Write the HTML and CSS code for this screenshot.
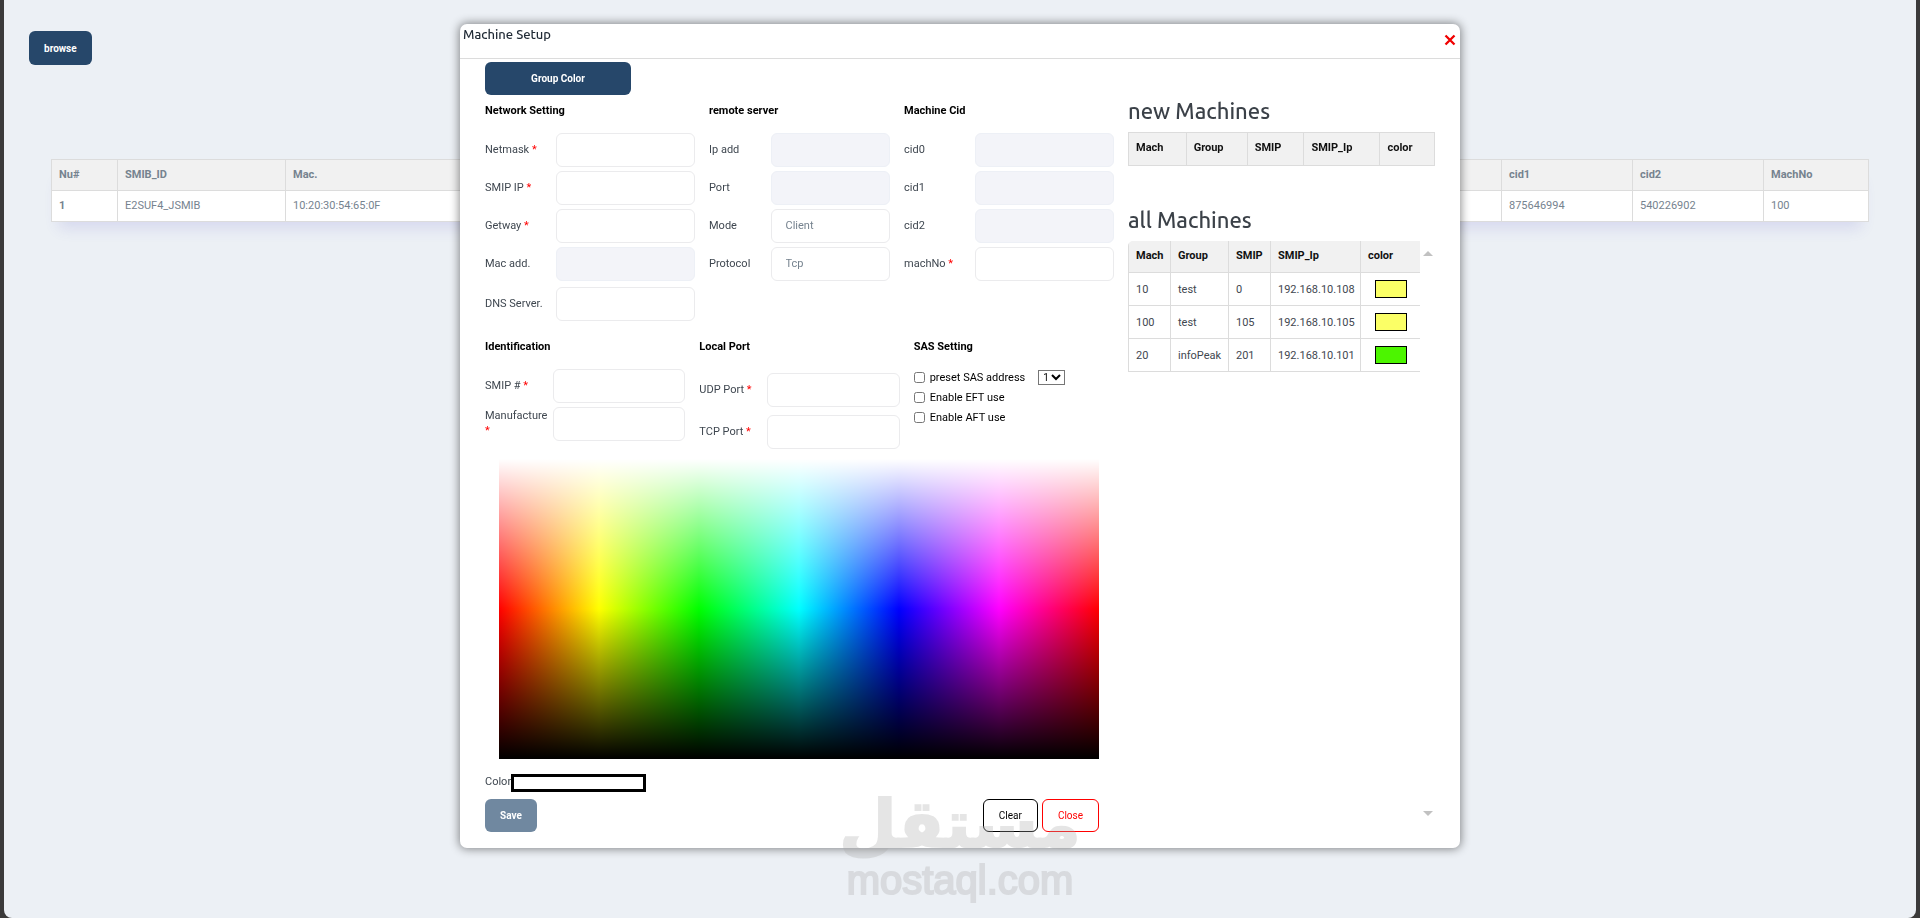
FILE: index.html
```
<!DOCTYPE html>
<html lang="en">
<head>
  <meta charset="UTF-8">
  <title>Machine Setup</title>
  <link rel="stylesheet" href="styles.css">
</head>
<body>
<div class="page">
  <button type="button" class="btn btn-primary btn-browse">browse</button>
  <table class="table main-table">
    <colgroup>
      <col class="c-nu"><col class="c-smib"><col><col class="c-cid"><col class="c-cid"><col class="c-mach">
    </colgroup>
    <thead>
      <tr><th>Nu#</th><th>SMIB_ID</th><th>Mac.</th><th>cid1</th><th>cid2</th><th>MachNo</th></tr>
    </thead>
    <tbody>
      <tr><th>1</th><td>E2SUF4_JSMIB</td><td>10:20:30:54:65:0F</td><td>875646994</td><td>540226902</td><td>100</td></tr>
    </tbody>
  </table>
</div>

<div class="overlay">
  <div class="modal" role="dialog" aria-labelledby="modal-title">
    <div class="modal-header">
      <span id="modal-title" class="modal-title">Machine Setup</span>
      <button type="button" class="btn-x" aria-label="Close dialog">
        <svg width="12" height="12" viewBox="0 0 12 12"><path d="M1.5 1.5L10.5 10.5M10.5 1.5L1.5 10.5" stroke="#f00000" stroke-width="2.3"/></svg>
      </button>
    </div>
    <div class="modal-body">
      <form class="setup">
        <button type="button" class="btn btn-primary btn-group">Group Color</button>
        <div class="cols cols-net">
          <div class="group">
            <h4>Network Setting</h4>
            <div class="field"><label for="netmask">Netmask <i>*</i></label><input type="text" id="netmask"></div>
            <div class="field"><label for="smipip">SMIP IP <i>*</i></label><input type="text" id="smipip"></div>
            <div class="field"><label for="getway">Getway <i>*</i></label><input type="text" id="getway"></div>
            <div class="field"><label for="macadd">Mac add.</label><input type="text" id="macadd" disabled></div>
            <div class="field field-dns"><label for="dns">DNS Server.</label><input type="text" id="dns"></div>
          </div>
          <div class="group">
            <h4>remote server</h4>
            <div class="field"><label for="ipadd">Ip add</label><input type="text" id="ipadd" disabled></div>
            <div class="field"><label for="port">Port</label><input type="text" id="port" disabled></div>
            <div class="field"><label for="mode">Mode</label><select id="mode"><option>Client</option></select></div>
            <div class="field"><label for="protocol">Protocol</label><select id="protocol"><option>Tcp</option></select></div>
          </div>
          <div class="group">
            <h4>Machine Cid</h4>
            <div class="field"><label for="cid0">cid0</label><input type="text" id="cid0" disabled></div>
            <div class="field"><label for="cid1">cid1</label><input type="text" id="cid1" disabled></div>
            <div class="field"><label for="cid2">cid2</label><input type="text" id="cid2" disabled></div>
            <div class="field"><label for="machno">machNo <i>*</i></label><input type="text" id="machno"></div>
          </div>
        </div>

        <div class="cols cols-id">
          <div class="group">
            <h4>Identification</h4>
            <div class="field"><label for="smip">SMIP # <i>*</i></label><input type="text" id="smip"></div>
            <div class="field"><label for="manufacture">Manufacture <i>*</i></label><input type="text" id="manufacture"></div>
          </div>
          <div class="group group-port">
            <h4>Local Port</h4>
            <div class="field"><label for="udp">UDP Port <i>*</i></label><input type="text" id="udp"></div>
            <div class="field"><label for="tcp">TCP Port <i>*</i></label><input type="text" id="tcp"></div>
          </div>
          <div class="group group-sas">
            <h4>SAS Setting</h4>
            <div class="check">
              <input type="checkbox" id="preset"><label for="preset">preset SAS address</label>
              <select class="sas-address" aria-label="SAS address"><option>1</option></select>
            </div>
            <div class="check"><input type="checkbox" id="eft"><label for="eft">Enable EFT use</label></div>
            <div class="check"><input type="checkbox" id="aft"><label for="aft">Enable AFT use</label></div>
          </div>
        </div>

        <div class="palette" role="img" aria-label="Color palette"></div>

        <div class="color-row"><label for="color">Color</label><input type="text" id="color" readonly></div>
        <div class="actions">
          <button type="button" class="btn btn-primary btn-save" disabled>Save</button>
          <button type="button" class="btn btn-clear">Clear</button>
          <button type="button" class="btn btn-close">Close</button>
        </div>
      </form>

      <div class="machines">
        <h2>new Machines</h2>
        <table class="table new-table">
          <thead><tr><th>Mach</th><th>Group</th><th>SMIP</th><th>SMIP_Ip</th><th>color</th></tr></thead>
        </table>
        <h2>all Machines</h2>
        <div class="scroll">
          <div class="scroll-view">
            <table class="table all-table">
              <colgroup>
                <col class="c-no"><col class="c-group"><col class="c-no"><col class="c-ip"><col>
              </colgroup>
              <thead><tr><th>Mach</th><th>Group</th><th>SMIP</th><th>SMIP_Ip</th><th>color</th></tr></thead>
              <tbody>
                <tr><td>10</td><td>test</td><td>0</td><td>192.168.10.108</td><td><span class="swatch yellow"></span></td></tr>
                <tr><td>100</td><td>test</td><td>105</td><td>192.168.10.105</td><td><span class="swatch yellow"></span></td></tr>
                <tr><td>20</td><td>infoPeak</td><td>201</td><td>192.168.10.101</td><td><span class="swatch green"></span></td></tr>
              </tbody>
            </table>
          </div>
          <div class="scroll-bar">
            <svg width="10" height="5" viewBox="0 0 10 5"><path d="M5 0L10 5H0z" fill="#c1c1c1"/></svg>
            <svg width="10" height="5" viewBox="0 0 10 5"><path d="M0 0H10L5 5z" fill="#c1c1c1"/></svg>
          </div>
        </div>
      </div>
    </div>
  </div>
</div>

<div class="watermark">
  <span class="wm-ar" lang="ar" dir="rtl">مستقل</span>
  <span class="wm-en">mostaql.com</span>
</div>
</body>
</html>
```
FILE: styles.css
```
* {
  box-sizing: border-box;
}

body {
  margin: 0;
  background: #3b3a3a;
  font-family: Roboto, "Liberation Sans", sans-serif;
  font-size: 11px;
  line-height: 15px;
  color: #3f4750;
}

button, input, select {
  font-family: inherit;
  font-size: inherit;
}

.page {
  min-height: 100vh;
  margin: 0 4px;
  padding: 31px 47px 0;
  background: #ecf0f5;
  border-radius: 0 0 8px 8px;
}

/* buttons */
.btn {
  display: block;
  height: 33px;
  padding: 0 15px;
  border: 1px solid transparent;
  border-radius: 6px;
  background: #fff;
  font-size: 10px;
}

.btn-primary {
  padding: 0 14px;
  background: #26476a;
  color: #fff;
  font-weight: 700;
}

.btn-browse {
  height: 34px;
  margin-left: -22px;
}

.btn-group {
  width: 146px;
}

.btn-save {
  background: #7088a0;
}

.btn-clear {
  margin-left: auto;
  border-color: #000;
  color: #000;
}

.btn-close {
  border-color: #f00;
  color: #f00;
}

/* tables */
.table {
  width: 100%;
  border-collapse: collapse;
  background: #fff;
}

.table th, .table td {
  padding: 7px;
  border: 1px solid #dcdcdc;
  text-align: left;
}

.table thead th {
  background: #f1f1f1;
  color: #111;
}

.main-table {
  table-layout: fixed;
  margin-top: 94px;
  box-shadow: 0 14px 14px -8px rgba(80, 70, 200, 0.14);
  color: #76838f;
}

.main-table thead th {
  color: #76838f;
}

.main-table th, .main-table td {
  padding-bottom: 8px;
}

.c-nu { width: 66px; }
.c-smib { width: 168px; }
.c-cid { width: 131px; }
.c-mach { width: 105px; }

/* dialog */
.overlay {
  position: fixed;
  inset: 0;
  padding-top: 24px;
}

.modal {
  width: 1000px;
  max-width: 96%;
  margin: 0 auto;
  background: #fff;
  border-radius: 7px;
  box-shadow: 0 0 10px 1px rgba(0, 0, 0, 0.45);
}

.modal-header {
  display: flex;
  justify-content: space-between;
  height: 35px;
  padding: 0 4px 2px 3px;
  border-bottom: 1px solid #dcdcdc;
}

.modal-title {
  font-family: Ubuntu, "Noto Sans", sans-serif;
  font-size: 13px;
  font-weight: 500;
  line-height: 20px;
  color: #212b36;
}

.btn-x {
  align-self: center;
  height: 12px;
  padding: 0;
  border: 0;
  background: none;
}

.btn-x svg {
  display: block;
}

.modal-body {
  display: grid;
  grid-template-columns: 629fr 307fr;
  gap: 14px;
  padding: 3px 25px 16px;
}

h4 {
  margin: 0 0 14px;
  font-size: 11px;
  line-height: 16px;
  color: #000;
}

.cols {
  display: grid;
  gap: 14px;
}

.cols-net {
  grid-template-columns: 210fr 181fr 210fr;
  padding-top: 8px;
}

.cols-id {
  grid-template-columns: 1fr 1fr 1fr;
  padding-top: 18px;
}

.field {
  display: grid;
  grid-template-columns: 34% 66%;
  align-items: center;
  margin-bottom: 4px;
}

.field label {
  padding-bottom: 2px;
}

.field i {
  font-style: normal;
  color: #f00;
}

.field input, .field select {
  width: 100%;
  height: 34px;
  padding: 0 14px 2px;
  border: 1px solid #ebebed;
  border-radius: 6px;
  background: #fff;
  color: #76838f;
}

.field select {
  appearance: none;
}

.field input:disabled {
  border-color: #edf0f6;
  background: #f3f4f9;
}

.field-dns {
  margin-top: 6px;
  margin-bottom: 0;
}

.group-port h4 {
  margin-bottom: 18px;
}

.group-port .field {
  margin-bottom: 8px;
}

.group-sas h4 {
  margin-bottom: 12px;
}

.check {
  display: flex;
  align-items: center;
  height: 20px;
  color: #000;
}

.check input {
  width: 11px;
  height: 11px;
  margin: 0 5px 0 0;
}

.sas-address {
  width: 27px;
  height: 15px;
  margin-left: 13px;
  padding: 0;
  border: 1px solid #767676;
  border-radius: 0;
  background: #fff;
  font-size: 10px;
}

.palette {
  height: 300px;
  margin: 2px 15px 0 14px;
  background:
    linear-gradient(to bottom, #fff, rgba(255, 255, 255, 0) 50%, rgba(0, 0, 0, 0) 50%, #000),
    linear-gradient(to right, #f00, #ff0, #0f0, #0ff, #00f, #f0f, #f00);
}

.color-row {
  display: flex;
  margin-top: 15px;
}

.color-row input {
  width: 135px;
  height: 18px;
  padding: 0;
  border: 3px solid #000;
  background: #fff;
}

.actions {
  display: flex;
  gap: 4px;
  margin: 7px 15px 0 0;
}

/* machines list */
.machines {
  display: flex;
  flex-direction: column;
  padding-top: 36px;
}

h2 {
  margin: 0;
  font-family: Ubuntu, "Noto Sans", sans-serif;
  font-size: 22px;
  font-weight: 500;
  line-height: 26px;
  color: #3b4148;
}

.new-table {
  margin: 8px 0 41px;
}

.new-table th {
  padding-bottom: 10px;
}

.scroll {
  display: flex;
  flex: 1;
  margin: 8px 0;
}

.scroll-view {
  flex: 1;
  overflow: hidden;
  border-radius: 5px 0 0 0;
}

.scroll-bar {
  display: flex;
  flex-direction: column;
  align-items: center;
  justify-content: space-between;
  width: 15px;
  padding: 10px 0 8px;
}

.all-table {
  table-layout: fixed;
}

.c-no { width: 42px; }
.c-group { width: 58px; }
.c-ip { width: 90px; }

.all-table th {
  padding-bottom: 9px;
  border-top: 0;
}

.all-table tr > :last-child {
  border-right: 0;
}

.swatch {
  display: block;
  width: 32px;
  height: 18px;
  margin-left: 7px;
  border: 1px solid #000;
}

.yellow { background: #fbff66; }
.green { background: #4cf500; }

/* site mark laid over the page */
.watermark {
  position: fixed;
  right: 0;
  bottom: 16px;
  left: 0;
  display: flex;
  flex-direction: column;
  align-items: center;
  color: #aaa;
  opacity: 0.3;
  pointer-events: none;
}

.wm-ar {
  font-family: "DejaVu Sans", sans-serif;
  font-size: 66px;
  font-weight: 700;
  line-height: 66px;
  -webkit-text-stroke: 2px #aaa;
}

.wm-en {
  font-family: "Liberation Sans", sans-serif;
  font-size: 40px;
  line-height: 44px;
  -webkit-text-stroke: 2px #aaa;
}
```
